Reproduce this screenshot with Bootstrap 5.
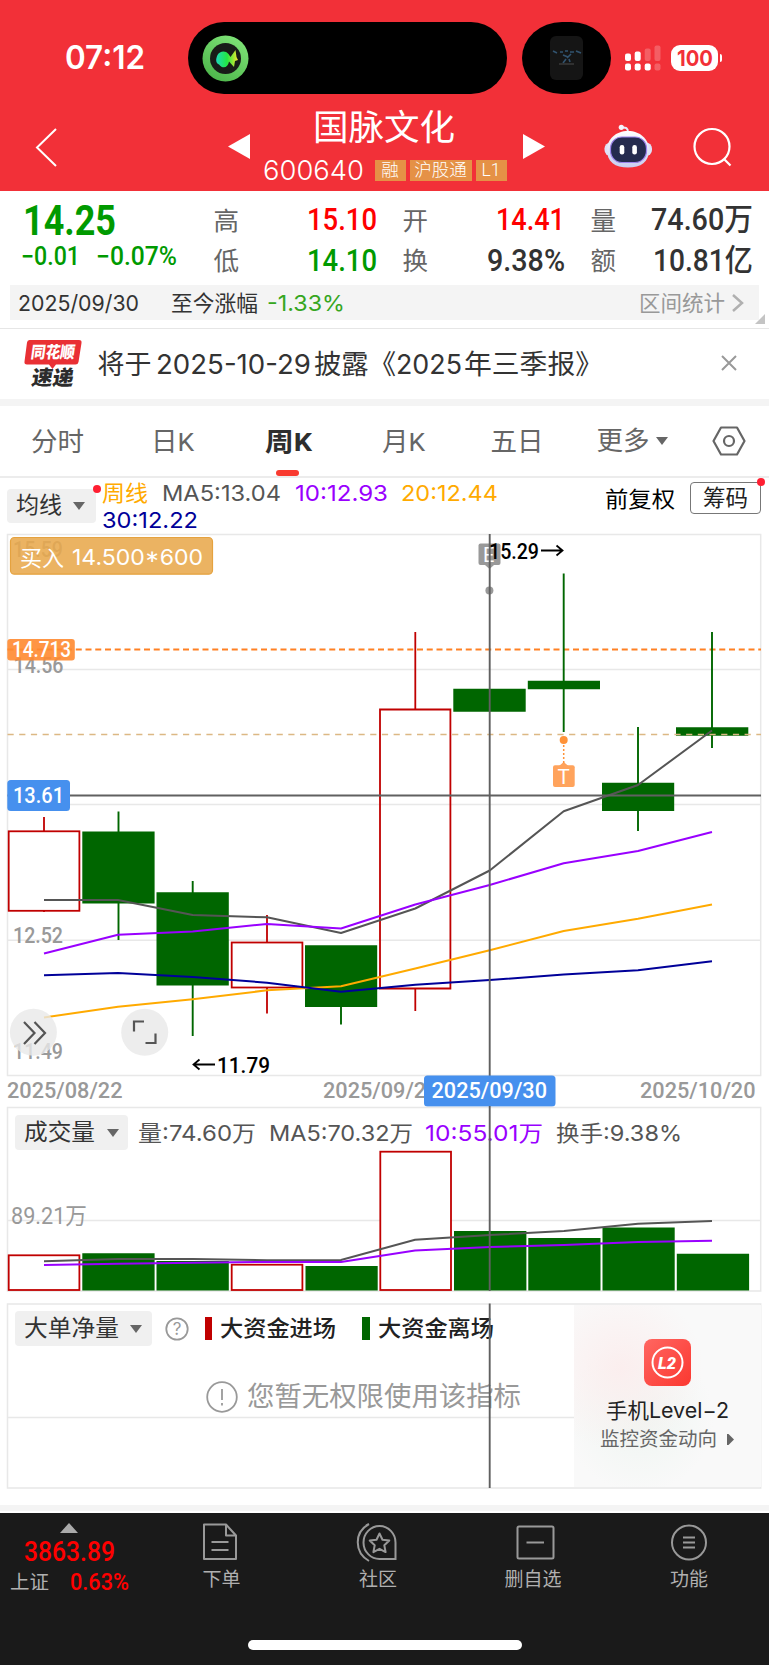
<!DOCTYPE html>
<html lang="zh-CN">
<head>
<meta charset="utf-8">
<meta name="viewport" content="width=device-width, initial-scale=1">
<title>国脉文化 600640</title>
<link href="https://cdn.jsdelivr.net/npm/bootstrap@5.3.0/dist/css/bootstrap.min.css" rel="stylesheet">
<style>
body{font-family:Roboto,"Noto Sans CJK SC",sans-serif;width:769px;height:1665px;overflow:hidden;background:#fff;color:#333;line-height:1}
svg{display:block;flex:none;overflow:visible}
.fit{display:inline-block;white-space:nowrap;transform-origin:0 50%;flex:none}
.round-face{font-family:Inter,"Noto Sans CJK SC",sans-serif}
.top-area{background:#f23038;height:191px;color:#fff}
.status{height:105px;padding:22px 0 11px 65px}
.clock{font-size:32px;font-weight:600;line-height:72px;width:123px}
.island{width:319px;height:72px;border-radius:36px;background:#000;padding-left:14px}
.island-b{width:88.5px;height:72px;border-radius:40px/36px;background:#000;margin-left:15px}
.signal{margin-left:14px}
.battery{width:47px;height:26px;border-radius:9px;background:#fff;color:#f23038;font-weight:700;font-size:22px;margin-left:10.5px}
.nub{width:2.5px;height:8px;background:#fff;border-radius:0 3px 3px 0;margin-left:1.5px}
.titlebar{height:86px;padding-left:35px}
.stock{width:273px}
.stock-name{font-size:35.5px;font-weight:400;line-height:42px;font-family:"Noto Sans CJK SC",sans-serif;margin-left:-5px;margin-top:-1px}
.stock-code{font-size:27px;font-weight:300;height:24px;margin:12.5px 0 0 13px}
.tag{background:#e59146;height:21px;line-height:20px;font-size:17.5px;text-align:center}
.quote{height:94px;display:grid;grid-template-columns:193px 26px 137px 26px 25px 137px 26px 25px 137px;grid-template-rows:39px 42px;padding:10px 0 0 20.5px}
.q-label{font-size:25.5px;color:#666;align-self:center;font-family:"Noto Sans CJK SC",sans-serif;line-height:32px;margin-top:-4px}
.q-value{font-size:30.5px;font-weight:500;justify-self:end;align-self:center;line-height:36px;margin-top:-1px}
.up{color:#f00}.down{color:#009a00}
.range{margin:0 10px;height:35px;background:#f4f4f4;padding:0 15px 0 7.5px;font-size:22px}
.news{height:71px;border-top:1px solid #e6e6e6;padding-left:24px;color:#333;font-size:27px}
.band{background:#f4f4f4}
.periods{height:71.5px;border-bottom:2px solid #ececec;font-size:26.5px;color:#666}
.periods>div{position:relative;height:69px;line-height:71px;flex:none;white-space:nowrap}
.active-tab{color:#2e2e2e;font-weight:700}
.active-tab:after{content:"";position:absolute;left:11.5px;top:64px;width:23px;height:6px;border-radius:3px;background:#f93a2f}
.ma-row{height:56.5px;font-size:22px}
.pick{background:#f0f0f0;border-radius:4px;height:34.5px;font-size:23px;color:#333;position:relative}
.reddot{position:absolute;width:8px;height:8px;border-radius:50%;background:#ff1f32}
.caret{width:0;height:0;border:6px solid transparent;border-top:8.5px solid #666;border-bottom:0}
.chip{width:71px;height:32px;border:1.5px solid #777;border-radius:4px;position:relative;font-size:22.5px;line-height:29px;text-align:center;color:#222}
.panel{position:relative;width:769px}
.panel>svg.plot{position:absolute;left:0;top:0;pointer-events:none}
.legend-row{color:#555;font-size:22px}
.swatch{width:7.5px;height:23px}
.promo{position:absolute;left:573.5px;top:2px;width:187px;height:182px;background:radial-gradient(circle at 25% 35%,#fbeeee 0,rgba(251,238,238,0) 45%),radial-gradient(circle at 35% 62%,#eff5f1 0,rgba(239,245,241,0) 45%),#f9f9f9}
.dock{background:#1a1a1a;height:153px;color:#b0b0b0;position:relative}
.dock-item{width:80px;font-size:19px}
.dock-item svg{margin:10px 0 9.5px}
.homebar{width:273.5px;height:10px;border-radius:5px;background:#fff;margin-left:248px}
</style>
</head>
<body>
<header class="top-area">
  <div class="status d-flex align-items-center">
    <div class="clock round-face"><span class="fit" data-w="80">07:12</span></div>
    <div class="island d-flex align-items-center">
      <svg width="47" height="47" viewBox="0 0 47 47"><defs><linearGradient id="g1" x1="0" y1="1" x2=".6" y2="0"><stop stop-color="#47b045"/><stop offset="1" stop-color="#7be074"/></linearGradient><linearGradient id="g2"><stop stop-color="#1fd9b8"/><stop offset=".5" stop-color="#22e843"/><stop offset="1" stop-color="#f6e52d"/></linearGradient></defs><circle cx="23.5" cy="23.5" r="23" fill="url(#g1)"/><circle cx="23.5" cy="23.5" r="15.5" fill="#181c18"/><path d="M15.500 20c2-4 8-5 11-1l2 3 5-7 1 7 1.500 3-3 1-1 6-5-5.500c-1 6-6 8-10 3-4-2-3-6-1.500-9.500z" fill="url(#g2)"/></svg>
    </div>
    <div class="island-b d-flex align-items-center justify-content-center">
      <svg width="33" height="44" viewBox="0 0 33 44"><rect width="33" height="44" rx="6" fill="#151515"/><path d="M3 15l4 2M26 15l5 2M10 16h3M15 15h3M20 16h4M13 19l5 2M21 18l-4 4M16 23l-3 4M19 23l1 3" stroke="#31536f" stroke-width="1.600" fill="none"/><path d="M9 28h15" stroke="#3a3a3a" stroke-width="1.500"/></svg>
    </div>
    <svg class="signal" width="36" height="26" viewBox="0 0 36 26" fill="#fff"><rect y="8.500" width="6" height="7.500" rx="2"/><rect x="9.700" y="6.500" width="6" height="9.500" rx="2"/><g opacity=".22"><rect x="19.700" y="3.500" width="6" height="12.500" rx="2"/><rect x="29.500" y=".5" width="6" height="15.500" rx="2"/><rect x="29.500" y="18.500" width="6" height="7" rx="2"/></g><rect y="18.500" width="6" height="7" rx="2"/><rect x="9.700" y="18.500" width="6" height="7" rx="2"/><rect x="19.700" y="18.500" width="6" height="7" rx="2"/></svg>
    <div class="battery round-face d-flex align-items-center justify-content-center"><span class="fit" data-w="36">100</span></div><div class="nub"></div>
  </div>
  <div class="titlebar d-flex">
    <svg width="22" height="39" viewBox="0 0 22 39" style="margin-top:23px"><path d="M21 1L2 19.5 21 38" fill="none" stroke="#fff" stroke-width="2"/></svg>
    <svg width="22" height="25" viewBox="0 0 22 25" style="margin:29px 0 0 171px"><path d="M22 0v25L0 12.5z" fill="#fff"/></svg>
    <div class="stock text-center">
      <div class="stock-name">国脉文化</div>
      <div class="stock-code d-flex align-items-center">
        <span class="fit round-face" data-w="101">600640</span>
        <span class="tag" style="width:31px;margin-left:10.5px">融</span><span class="tag" style="width:62px;margin-left:4px">沪股通</span><span class="tag" style="width:31px;margin-left:4px">L1</span>
      </div>
    </div>
    <svg width="22" height="25" viewBox="0 0 22 25" style="margin-top:29px"><path d="M0 0v25l22-12.5z" fill="#fff"/></svg>
    <svg width="48" height="44" viewBox="605 124 48 44" style="margin:19px 0 0 59px"><defs><linearGradient id="g3" x1="0" y1="0" x2="0" y2="1"><stop stop-color="#fff"/><stop offset="1" stop-color="#c9cdf0"/></linearGradient></defs><path d="M622 127.500c5-.5 7 .5 7 5" stroke="#e9eafa" stroke-width="2" fill="none"/><circle cx="622.300" cy="127.300" r="2.600" fill="#f4f4fd"/><rect x="605.500" y="142.500" width="47.500" height="13.500" rx="6" fill="#dfe1f7"/><path d="M629 131C641 131 650 139 650 150 650 162 642 167.500 629 167.500S608 162 608 150C608 139 617 131 629 131z" fill="url(#g3)"/><rect x="611.500" y="137" width="36" height="25.500" rx="11.500" fill="#252b4e" stroke="#9c83ec" stroke-width="1.200"/><rect x="620.700" y="145" width="4.600" height="9.500" rx="2.200" fill="#fff"/><rect x="633.300" y="145" width="4.600" height="9.500" rx="2.200" fill="#fff"/></svg>
    <svg width="40" height="40" viewBox="0 0 40 40" style="margin:22px 0 0 41px" fill="none" stroke="#fff" stroke-width="2.200"><circle cx="19" cy="19.500" r="17.500"/><path d="M31 32l6.500 6.500"/></svg>
  </div>
</header>

<section class="quote">
  <div class="down" style="font-size:42px;font-weight:700;line-height:40px;padding-left:2.500px"><span class="fit" data-w="93">14.25</span></div>
  <div class="q-label">高</div><div class="q-value up"><span class="fit" data-w="70">15.10</span></div><div></div>
  <div class="q-label">开</div><div class="q-value up"><span class="fit" data-w="69">14.41</span></div><div></div>
  <div class="q-label">量</div><div class="q-value"><span class="fit" data-w="102">74.60万</span></div>
  <div class="down d-flex" style="font-size:25px;font-weight:500;line-height:34px"><span class="fit" data-w="59">−0.01</span><span class="fit" data-w="81" style="margin-left:16px">−0.07%</span></div>
  <div class="q-label">低</div><div class="q-value down"><span class="fit" data-w="70">14.10</span></div><div></div>
  <div class="q-label">换</div><div class="q-value"><span class="fit" data-w="78">9.38%</span></div><div></div>
  <div class="q-label">额</div><div class="q-value"><span class="fit" data-w="100">10.81亿</span></div>
</section>
<section class="range round-face d-flex align-items-center position-relative">
  <span class="fit" data-w="121">2025/09/30</span><span class="fit" data-w="87" style="margin-left:32.500px">至今涨幅</span><span class="fit" data-w="78" style="margin-left:8.500px;color:#36a61e">-1.33%</span>
  <span class="fit ms-auto" data-w="86" style="color:#999">区间统计</span>
  <svg width="12" height="18" viewBox="0 0 12 18" style="margin-left:7px" fill="none" stroke="#b0b0b0" stroke-width="2.500"><path d="M1 1l9 8-9 8"/></svg>
  <svg width="10" height="10" class="position-absolute" style="right:-5.500px;bottom:-4px"><path d="M10 0v10H0z" fill="#c4c4c4"/></svg>
</section>
<div style="height:8px"></div>
<section class="news round-face d-flex align-items-center">
  <svg width="58" height="49" viewBox="0 0 58 49" style="margin-top:-2px"><path d="M5.500 1h49.500q3 0 2.500 3l-3 19q-.5 2.500-3 2.500H32L28.500 30 25 25.500H3q-3 0-2.500-3L3 3.500q.3-2.500 2.500-2.500z" fill="#e93034"/><g font-family="Noto Sans CJK SC" font-weight="900" font-size="16.500"><text x="9" y="19.500" fill="#fff" transform="skewX(-8)" textLength="44" lengthAdjust="spacingAndGlyphs">同花顺</text><text x="14" y="46.500" font-size="20.500" fill="#2c2c2c" transform="skewX(-9)" textLength="42" lengthAdjust="spacingAndGlyphs">速递</text></g></svg>
  <span class="fit" data-w="54" style="margin-left:15.500px">将于</span><span class="fit" data-w="155" style="margin-left:4px">2025-10-29</span><span class="fit" data-w="82" style="margin-left:3px">披露《</span><span class="fit" data-w="66" style="margin-left:.5px">2025</span><span class="fit" data-w="139" style="margin-left:2px">年三季报》</span>
  <svg width="16" height="16" viewBox="0 0 16 16" style="margin:-2px 0 0 117.500px" stroke="#999" stroke-width="2"><path d="M1 1l14 14M15 1L1 15"/></svg>
</section>
<div class="band" style="height:7px"></div>
<nav class="periods d-flex">
  <div style="margin-left:31px;width:120px">分时</div><div style="width:113.500px">日K</div><div class="active-tab" style="width:117.500px"><span class="fit" data-w="47">周K</span></div><div style="width:108.500px">月K</div><div style="width:106px">五日</div>
  <div class="d-flex align-items-center" style="width:115.500px">更多<i class="caret" style="margin-left:6px"></i></div>
  <div class="d-flex align-items-center"><svg width="34" height="30" viewBox="0 0 34 30" fill="none" stroke="#666" stroke-width="2.200"><path d="M9 1.500h16L32.500 15 25 28.500H9L1.500 15z" stroke-linejoin="round"/><circle cx="17" cy="15" r="5"/></svg></div>
</nav>
<section class="ma-row round-face d-flex">
  <div class="pick d-flex align-items-center" style="width:88.500px;margin:11px 0 0 7px;padding-left:9px"><span class="fit" data-w="46">均线</span><i class="caret" style="margin-left:11px"></i><i class="reddot" style="right:-5px;top:-4px"></i></div>
  <div style="margin-left:6.500px;width:502.500px;padding-top:2px;line-height:27.500px">
    <div class="d-flex"><span class="fit" data-w="46" style="color:#ffaa00">周线</span><span class="fit" data-w="119" style="margin-left:14px;color:#555">MA5:13.04</span><span class="fit" data-w="93" style="margin-left:13.500px;color:#9900ff">10:12.93</span><span class="fit" data-w="97" style="margin-left:13px;color:#ffaa00">20:12.44</span></div>
    <div><span class="fit" data-w="96" style="color:#000099">30:12.22</span></div>
  </div>
  <span class="fit text-black" data-w="70" style="margin-top:10px">前复权</span>
  <div class="chip" style="margin:4px 0 0 15.500px">筹码<i class="reddot" style="right:-5px;top:-5px"></i></div>
</section>

<section class="panel" style="height:572px">
<svg width="769" height="572" viewBox="0 534 769 572" font-family="Roboto,'Noto Sans CJK SC',sans-serif" font-size="22.500">
  <g fill="none" stroke="#e8e8e8" stroke-width="1.500"><path d="M7.500 534.500H760.700V1075.500H7.500zM8 669.500H761M8 804.500H761M8 940.300H761"/></g>
  <g fill="#999" font-weight="500"><text x="13" y="557" textLength="50" lengthAdjust="spacingAndGlyphs">15.59</text><text x="13.500" y="672.500" textLength="50" lengthAdjust="spacingAndGlyphs">14.56</text></g>
  <path d="M7.500 649.500H761" stroke="#ff8023" stroke-width="2" stroke-dasharray="6 3.750"/>
  <g stroke="#c00000" stroke-width="1.800" fill="none"><path d="M44 817V831M44 911V912M267 915V942M267 988V1013.500M415.300 632V709M415.300 989V1011"/><g fill="#fff"><rect x="8.700" y="831.300" width="70.700" height="79.500"/><rect x="231.700" y="942.500" width="70.700" height="45"/></g><path d="M380 709.500H450.400V988.500H380z"/></g>
  <g stroke="#006600" stroke-width="1.900"><path d="M118.500 811.500V940M192.700 881V1036M341 1007V1024.500M563.700 573.500V732M638 727V831M712 632V748"/></g>
  <g fill="#006600"><path d="M82.300 831.500h72.300V903.500h-72.300zM156.500 892.300h72.300V985.600h-72.300zM305 945.300h72.200V1007h-72.200zM453.300 688.800h72.400v23h-72.400zM527.800 680.800H600v8.500h-72.200zM602 782.800h72.200v28.300H602zM676 727.200h72.300v8.500H676z"/></g>
  <path d="M7.500 734.500H761" stroke="#dcb884" stroke-width="1.500" stroke-dasharray="6.200 5.500"/>
  <g fill="#999" font-weight="500"><text x="13" y="943" textLength="50" lengthAdjust="spacingAndGlyphs">12.52</text><text x="13" y="1059" textLength="50" lengthAdjust="spacingAndGlyphs">11.49</text>
  <text x="7" y="1098" textLength="115.500" lengthAdjust="spacingAndGlyphs">2025/08/22</text><text x="323" y="1098" textLength="115.500" lengthAdjust="spacingAndGlyphs">2025/09/26</text><text x="640" y="1098" textLength="115.500" lengthAdjust="spacingAndGlyphs">2025/10/20</text></g>
  <g fill="none" stroke-width="2" stroke-linejoin="round">
    <path stroke="#555" d="M44 900L118 900 192.700 915 267 917.300 341 933 415.300 908.500 489.700 870.500 563.700 811.300 638 785 712 730.500"/>
    <path stroke="#9900ff" d="M44 953.500L118 934.700 192.700 931.500 267 924 341 928.500 415.300 904.500 489.700 885 563.700 863.300 638 851 712 832"/>
    <path stroke="#ffaa00" d="M44 1017.500L118 1006.700 192.700 999.300 267 990.300 341 986.300 415.300 968.500 489.700 950.300 563.700 931 638 918.700 712 904.500"/>
    <path stroke="#000099" d="M44 975.300L118 973 192.700 977 267 982.700 341 991.700 415.300 984.700 489.700 980 563.700 974.500 638 970.300 712 961.300"/>
  </g>
  <g fill="#999"><rect x="478.500" y="543.500" width="22" height="21.500" rx="2"/><path d="M485 565l4.500 4 4.500-4z"/><circle cx="489.400" cy="590.500" r="4"/></g>
  <text x="483" y="562" font-size="20" fill="#fff">E</text>
  <g fill="#ffa35c"><rect x="553" y="765.300" width="21.700" height="21.700" rx="2"/><path d="M559 766l4.700-4 4.700 4z"/><circle cx="563.700" cy="740" r="4" fill="#ff9238"/></g><path d="M563.700 745V763" stroke="#ff9238" stroke-width="1.500" stroke-dasharray="2 2"/>
  <text x="563.700" y="783.700" font-size="20.500" fill="#fff" text-anchor="middle">T</text>
  <path d="M7.500 795.500H761M489.700 534V1106" stroke="#606060" stroke-width="1.900"/>
  <g fill="#000" font-weight="500"><text x="489" y="559" textLength="50" lengthAdjust="spacingAndGlyphs">15.29</text><text x="217" y="1073" textLength="53" lengthAdjust="spacingAndGlyphs">11.79</text></g>
  <path d="M541 550.500H562M556.500 545.500l6 5-6 5M215 1064.500H194M199.500 1059.500l-6 5 6 5" fill="none" stroke="#000" stroke-width="1.800"/>
  <g fill="#e8e8e8" fill-opacity=".8"><circle cx="33.400" cy="1032.300" r="23.500"/><circle cx="144.700" cy="1032.300" r="23.500"/></g>
  <path d="M24 1022l10.500 11L24 1044M34.500 1022L45 1033l-10.500 11M134 1031.500V1021.500H144M155.500 1033.500V1043H145.500" fill="none" stroke="#555" stroke-width="2.200"/>
  <rect x="10.500" y="537.500" width="202" height="36.700" rx="4" fill="#e8a84c" fill-opacity=".88" stroke="#e5a23f" stroke-width="1.200"/>
  <g font-family="Inter,'Noto Sans CJK SC',sans-serif" fill="#fff" font-size="22"><text x="20" y="565.500" textLength="44" lengthAdjust="spacingAndGlyphs">买入</text><text x="72" y="565" textLength="131" lengthAdjust="spacingAndGlyphs">14.500*600</text></g>
  <rect x="7.300" y="639" width="67.500" height="21.500" rx="3" fill="#ff8a30" fill-opacity=".9"/><text x="12" y="657" fill="#fff" font-size="21.500" font-weight="500" textLength="59" lengthAdjust="spacingAndGlyphs">14.713</text>
  <rect x="7.300" y="780" width="62.700" height="31" rx="3.500" fill="#4690ee"/><text x="13" y="803" fill="#fff" font-weight="500" textLength="51" lengthAdjust="spacingAndGlyphs">13.61</text>
  <rect x="424" y="1075.500" width="131.500" height="31" rx="3.500" fill="#4690ee"/><text x="431.500" y="1098" fill="#fff" font-weight="500" textLength="115.500" lengthAdjust="spacingAndGlyphs">2025/09/30</text>
</svg>
</section>

<section class="panel round-face" style="height:197px;padding:9px 0 0 14.500px">
  <div class="legend-row d-flex align-items-center">
    <div class="pick d-flex align-items-center" style="width:113px;padding:1px 0 0 9.500px"><span class="fit" data-w="71">成交量</span><i class="caret" style="margin-left:11.500px"></i></div>
    <span class="fit" data-w="118" style="margin:2px 0 0 10px">量:74.60万</span><span class="fit" data-w="144" style="margin:2px 0 0 13px">MA5:70.32万</span><span class="fit" data-w="118" style="margin:2px 0 0 12.500px;color:#9900ff">10:55.01万</span><span class="fit" data-w="126" style="margin:2px 0 0 12.500px">换手:9.38%</span>
  </div>
  <svg class="plot" width="769" height="197" viewBox="0 1106 769 197" font-family="Roboto,'Noto Sans CJK SC',sans-serif">
    <path d="M7.500 1107.500H760.700V1291H7.500zM8 1220.500H761" fill="none" stroke="#e8e8e8" stroke-width="1.500"/>
    <text x="11" y="1224" font-size="23" fill="#999" textLength="76" lengthAdjust="spacingAndGlyphs">89.21万</text>
    <g fill="#fff" stroke="#c00000" stroke-width="1.800"><rect x="8.700" y="1255.300" width="70.700" height="34.700"/><rect x="231.700" y="1264.700" width="70.700" height="25.300"/><rect x="380.300" y="1151.700" width="70.700" height="138.300"/></g>
    <path fill="#006600" d="M82.300 1253.300h72.300V1290.500h-72.300zM156.500 1261h72.300v29.500h-72.300zM305.500 1266h72.200v24.500h-72.200zM454 1231h72.400v59.500H454zM528.300 1238h72.200v52.500h-72.200zM602.500 1227.500h72.200v63h-72.200zM676.800 1253.700h72.300v36.800h-72.300z"/>
    <g fill="none" stroke-width="2"><path stroke="#555" d="M44 1261.300L118 1259 193 1259 267 1260.300 341 1260 415 1239.700 490 1235 564 1231 638 1223.700 712 1221"/><path stroke="#9900ff" d="M44 1265L118 1263.700 193 1262.700 267 1262 341 1262 415 1250.500 490 1247 564 1245 638 1242 712 1240.700"/></g>
    <path d="M489.700 1106V1291" stroke="#606060" stroke-width="1.900"/>
  </svg>
</section>

<section class="panel round-face" style="height:202px;padding:8px 0 0 14.500px">
  <div class="legend-row d-flex align-items-center" style="color:#222">
    <div class="pick d-flex align-items-center" style="width:137px;padding:1px 0 0 9.500px"><span class="fit" data-w="95">大单净量</span><i class="caret" style="margin-left:10.500px"></i></div>
    <svg width="24" height="24" viewBox="0 0 24 24" style="margin:1px 0 0 13.500px"><circle cx="12" cy="12" r="10.700" fill="none" stroke="#999" stroke-width="1.800"/><text x="12" y="18" text-anchor="middle" font-size="17" fill="#999">?</text></svg>
    <i class="swatch" style="margin-left:15.500px;background:#c00000"></i><span class="fit fw-medium" data-w="116" style="margin-left:8px;font-weight:500">大资金进场</span>
    <i class="swatch" style="margin-left:26px;background:#006600"></i><span class="fit" data-w="116" style="margin-left:8.500px;font-weight:500">大资金离场</span>
  </div>
  <div class="d-flex align-items-center" style="margin:35px 0 0 191px;font-size:27.300px;color:#999"><svg width="32" height="32" viewBox="0 0 32 32" fill="none" stroke="#999" stroke-width="1.800"><circle cx="16" cy="16" r="14.800"/><path d="M16 8v11M16 22v2.500"/></svg><span class="fit" data-w="274" style="margin:1px 0 0 9.500px">您暂无权限使用该指标</span></div>
  <svg class="plot" width="769" height="202" viewBox="0 1303 769 202"><path d="M7.500 1304H760.700V1488H7.500zM8 1417.500H574" fill="none" stroke="#e8e8e8" stroke-width="1.500"/><path d="M489.700 1303.500V1488" stroke="#606060" stroke-width="1.900"/></svg>
  <div class="promo d-flex flex-column align-items-center">
    <svg width="47" height="47" viewBox="0 0 47 47" style="margin-top:34px"><defs><linearGradient id="g4" x1="0" y1="0" x2="1" y2="1"><stop stop-color="#ff6661"/><stop offset="1" stop-color="#fb3830"/></linearGradient></defs><rect width="47" height="47" rx="8" fill="url(#g4)"/><circle cx="23.500" cy="23.500" r="15" fill="none" stroke="#fff" stroke-width="2"/><text x="23" y="29.500" text-anchor="middle" font-family="Roboto" font-size="17" font-weight="900" font-style="italic" fill="#fff" textLength="18" lengthAdjust="spacingAndGlyphs">L2</text></svg>
    <div style="font-size:21px;color:#222;margin-top:14px"><span class="fit" data-w="123">手机Level−2</span></div>
    <div class="d-flex align-items-center" style="font-size:19.500px;color:#666;margin-top:9px"><span class="fit" data-w="117">监控资金动向</span><svg width="8" height="11" style="margin-left:9px"><path d="M1 0l1.500 0L8 5.500 2.500 11H1z" fill="#666"/></svg></div>
  </div>
</section>
<div class="band" style="height:6px"></div><div style="height:1.500px"></div>

<footer class="dock">
  <div class="d-flex">
    <div class="d-flex flex-column" style="width:179.500px;padding:10px 0 0 10px">
      <svg width="18" height="10" style="margin-left:49.500px"><path d="M9 0l9 10H0z" fill="#aaa"/></svg>
      <div class="up" style="margin:6.500px 0 0 13.500px;font-size:27px;font-weight:500;line-height:27px"><span class="fit" data-w="91">3863.89</span></div>
      <div class="d-flex align-items-center" style="margin-top:6px;font-size:19.500px;height:22px"><span class="fit" data-w="39">上证</span><span class="fit up" data-w="59" style="margin:-1px 0 0 20.500px;font-size:23px;font-weight:500">0.63%</span></div>
    </div>
    <div class="dock-item text-center"><svg width="80" height="38" viewBox="0 0 80 38" fill="none" stroke="#999" stroke-width="2"><path d="M24 1.500h22l10 11V36H24zM46 1.500v11h10M31.500 19h17M31.500 27h17" stroke-linejoin="round"/></svg><span class="ms-1">下单</span></div>
    <div class="dock-item text-center" style="margin-left:78.500px"><svg width="80" height="38" viewBox="0 0 80 38" fill="none" stroke="#999" stroke-width="2"><path d="M42 36A16 16.500 0 1 1 57.500 20V36zM31 1C16 9 16 29 31 38"/><path d="M41.500 10.500l3 6.300 6.800.8-5 4.700 1.300 6.800-6.100-3.300-6.100 3.300 1.300-6.800-5-4.700 6.800-.8z" stroke-linejoin="round"/></svg>社区</div>
    <div class="dock-item text-center" style="margin-left:75px"><svg width="80" height="38" viewBox="0 0 80 38" fill="none" stroke="#999" stroke-width="2"><rect x="24.500" y="3.500" width="36" height="32" rx="1.500"/><path d="M33.500 19.500h17.500"/></svg>删自选</div>
    <div class="dock-item text-center" style="margin-left:76px"><svg width="80" height="38" viewBox="0 0 80 38" fill="none" stroke="#999" stroke-width="2"><circle cx="40" cy="19.500" r="17"/><path d="M34 14.500h12M34 19.500h12M34 24.500h12"/></svg>功能</div>
  </div>
  <div class="homebar position-absolute" style="bottom:16px"></div>
</footer>
<script src="https://cdn.jsdelivr.net/npm/bootstrap@5.3.0/dist/js/bootstrap.bundle.min.js"></script>
<script>
// Condense or widen each label to its column width
document.querySelectorAll('.fit').forEach(function(el){
  var w=+el.dataset.w,r=el.getBoundingClientRect().width;
  el.style.transform='scaleX('+(w/r)+')';
  el.style.marginRight=(w-r)+'px';
});
</script>
</body>
</html>
